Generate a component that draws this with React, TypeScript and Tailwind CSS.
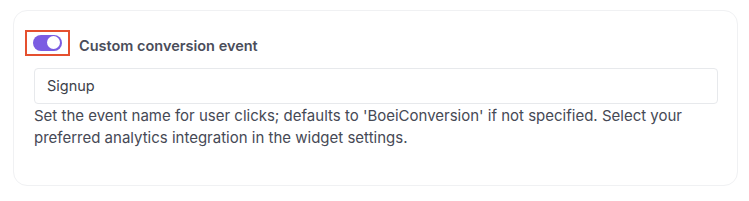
export default function App() {
  return (
    <div className="w-[749px] h-[201px] bg-white pt-[10px] pl-[13px]" style={{ fontFamily: "Inter, 'Noto Sans', sans-serif" }}>
      <div className="w-[725px] h-[176px] rounded-[14px] border border-[#f0f1f3] bg-white pl-[11px] pr-[20px] pt-[18px]">
        <div className="flex items-center">
          <div className="w-[45px] h-[26px] border-2 border-[#e5502f] flex items-center justify-center">
            <div className="w-[29px] h-[16px] rounded-full bg-[#7b5ce2] flex items-center justify-end pr-[2px]">
              <div className="w-[13px] h-[13px] rounded-full bg-white" />
            </div>
          </div>
          <span className="ml-[9px] mt-[6px] text-[14.5px] font-semibold text-[#4a4d5a]">Custom conversion event</span>
        </div>
        <div className="ml-[9px] mt-[11px] h-[36px] w-[684px] rounded-[4px] border border-[#e7e9ec] flex items-center pl-[12px] text-[14.5px] text-[#3d3f49]">
          Signup
        </div>
        <p className="ml-[9px] mt-[1px] text-[15px] leading-[22.5px] text-[#464955] w-[690px]">
          Set the event name for user clicks; defaults to 'BoeiConversion' if not specified. Select your preferred analytics integration in the widget settings.
        </p>
      </div>
    </div>
  );
}
